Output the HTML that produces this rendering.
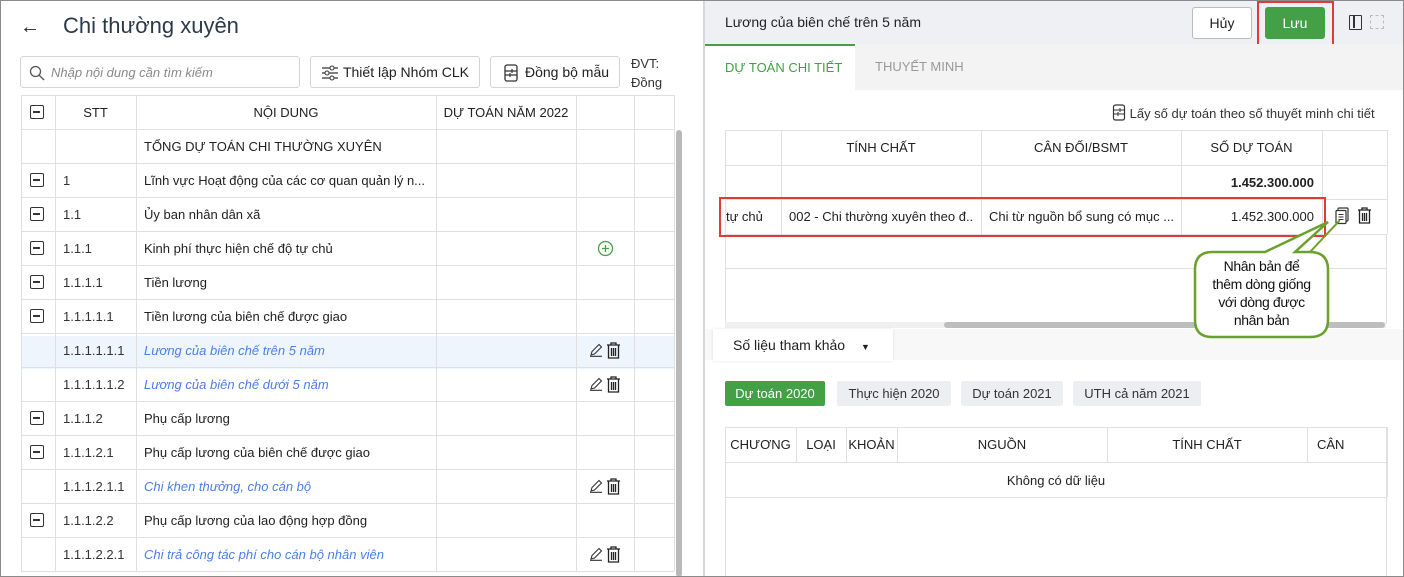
<!DOCTYPE html>
<html><head><meta charset="utf-8"><style>
*{box-sizing:border-box;margin:0;padding:0}
body{width:1404px;height:577px;overflow:hidden;font-family:"Liberation Sans",sans-serif;background:#fff;position:relative;color:#212121;font-size:13px}
.abs{position:absolute}
.frame{position:absolute;left:0;top:0;width:1404px;height:577px;border:1px solid #8a8a8a;pointer-events:none;z-index:50}
.cell{position:absolute;display:flex;align-items:center;white-space:nowrap;overflow:hidden}
.hl{position:absolute;background:#e0e0e0}
.cb{position:absolute;width:14px;height:14px;border:1.5px solid #333;border-radius:2px}
.cb:after{content:"";position:absolute;left:2px;top:5px;width:7px;height:1.5px;background:#333}
.it{color:#4a7fe8;font-style:italic}
.btn{position:absolute;border:1px solid #d5d5d5;border-radius:3px;background:#fff;display:flex;align-items:center;justify-content:center;font-size:14px;white-space:nowrap}
</style></head><body>
<div class="frame"></div>
<!-- LEFT -->
<div class="abs" style="left:20px;top:16px;font-size:20px">←</div>
<div class="abs" style="left:63px;top:13px;font-size:22px;color:#2b3a4a">Chi thường xuyên</div>
<div class="btn" style="left:20px;top:56px;width:280px;height:32px;justify-content:flex-start;padding-left:30px;color:#888;font-style:italic;font-size:13px">Nhập nội dung cần tìm kiếm
<svg class="abs" style="left:8px;top:8px" width="16" height="16" viewBox="0 0 16 16"><circle cx="6.5" cy="6.5" r="5" fill="none" stroke="#555" stroke-width="1.3"/><path d="M10 10l5 5" stroke="#555" stroke-width="1.3"/></svg></div>
<div class="btn" style="left:310px;top:56px;width:170px;height:32px;padding-left:22px">Thiết lập Nhóm CLK
<svg class="abs" style="left:10px;top:8px" width="18" height="16" viewBox="0 0 18 16"><path d="M1 3h16M1 8h16M1 13h16" stroke="#333" stroke-width="1.2"/><circle cx="11" cy="3" r="2" fill="#fff" stroke="#333"/><circle cx="6" cy="8" r="2" fill="#fff" stroke="#333"/><circle cx="11" cy="13" r="2" fill="#fff" stroke="#333"/></svg></div>
<div class="btn" style="left:490px;top:56px;width:130px;height:32px;padding-left:24px">Đồng bộ mẫu
<svg class="abs" style="left:12px;top:7px" width="16" height="18" viewBox="0 0 16 18"><rect x="2" y="1" width="12" height="16" rx="2" fill="none" stroke="#333" stroke-width="1.3"/><path d="M2 7h12M2 11h12M9 5v4M7 9v4" stroke="#333" stroke-width="1.2"/></svg></div>
<div class="abs" style="left:631px;top:54px;font-size:13px;line-height:19px;color:#333">ĐVT:<br>Đồng</div>

<div id="lt"></div>
<div class="abs" style="left:676px;top:130px;width:6px;height:447px;background:#b9b9b9;border-radius:3px"></div>
<div class="abs" style="left:703px;top:0;width:2px;height:577px;background:#d8d8d8"></div>

<!-- RIGHT -->
<div class="abs" style="left:705px;top:0;width:699px;height:44px;background:#eff0f4"></div>
<div class="abs" style="left:725px;top:14px;font-size:14px;color:#222">Lương của biên chế trên 5 năm</div>
<div class="btn" style="left:1192px;top:7px;width:60px;height:32px;border-color:#bbb">Hủy</div>
<div class="btn" style="left:1265px;top:7px;width:60px;height:32px;background:#43a047;border-color:#43a047;color:#fff">Lưu</div>
<div class="abs" style="left:1257px;top:1px;width:77px;height:50px;border:2px solid #e53935"></div>
<div class="abs" style="left:1349px;top:15px;width:13px;height:15px;border:1.5px solid #333;border-radius:1px"><div class="abs" style="left:3px;top:0;width:1.5px;height:12px;background:#333"></div></div>
<div class="abs" style="left:1370px;top:15px;width:14px;height:14px;border:1.5px dashed #bbb"></div>
<div class="abs" style="left:705px;top:44px;width:699px;height:46px;background:#f3f3f3"></div>
<div class="abs" style="left:705px;top:44px;width:150px;height:46px;background:#fff;border-top:2px solid #43a047"></div>
<div class="abs" style="left:725px;top:60px;font-size:13px;color:#43a047">DỰ TOÁN CHI TIẾT</div>
<div class="abs" style="left:875px;top:59px;font-size:13px;color:#999">THUYẾT MINH</div>
<div class="abs" style="left:1112px;top:104px;font-size:13px;color:#333;white-space:nowrap">
<svg style="vertical-align:-3px" width="14" height="17" viewBox="0 0 14 17"><rect x="1.5" y="1" width="11" height="15" rx="2" fill="none" stroke="#333" stroke-width="1.2"/><path d="M1.5 6h11M1.5 10h11M8 4v4M6 8v4" stroke="#333"/></svg> Lấy số dự toán theo số thuyết minh chi tiết</div>
<div id="rt"></div>
<div class="abs" style="left:725px;top:322px;width:661px;height:6px;background:#f0f0f0"></div>
<div class="abs" style="left:944px;top:322px;width:441px;height:6px;background:#bdbdbd;border-radius:3px"></div>
<div class="abs" style="left:719px;top:197px;width:607px;height:40px;border:2px solid #e53935"></div>
<div class="abs" style="left:1335px;top:207px"><svg width="14" height="18" viewBox="0 0 14 18"><rect x="3" y="1" width="10" height="13" rx="1" fill="none" stroke="#333" stroke-width="1.2"/><rect x="1" y="3.5" width="10" height="13" rx="1" fill="#fff" stroke="#333" stroke-width="1.2"/><path d="M3.5 7.5h5M3.5 10h5M3.5 12.5h5" stroke="#333"/></svg></div>
<div class="abs" style="left:1357px;top:207px"><svg width="15" height="17" viewBox="0 0 15 17"><path d="M1 3h13M5 3V1h5v2M2.5 3.5v12.5h10V3.5M5.5 6v8M7.5 6v8M9.5 6v8" fill="none" stroke="#222" stroke-width="1.3"/></svg></div>
<!-- callout -->
<svg class="abs" style="left:1190px;top:220px;z-index:5" width="150" height="120"><path d="M150 0 L120 32" stroke="#6aa02c" stroke-width="2"/><path d="M22 32 H75 L138 2 L105 32 H120 Q138 32 138 50 V100 Q138 117 120 117 H22 Q5 117 5 100 V50 Q5 32 22 32Z" fill="#fff" stroke="#6aa02c" stroke-width="2.5"/></svg>
<div class="abs" style="left:1195px;top:257px;width:133px;text-align:center;font-size:14px;line-height:18px;color:#111;z-index:6;letter-spacing:-0.4px">Nhân bản để<br>thêm dòng giống<br>với dòng được<br>nhân bản</div>

<div class="abs" style="left:705px;top:329px;width:699px;height:31px;background:#f8f8f8"></div>
<div class="abs" style="left:713px;top:329px;width:180px;height:32px;background:#fff;box-shadow:0 0 3px rgba(0,0,0,.1)"></div>
<div class="abs" style="left:733px;top:337px;font-size:14px">Số liệu tham khảo <span style="margin-left:12px;font-size:9px">▼</span></div>
<div class="abs" style="left:725px;top:381px;width:100px;height:25px;background:#43a047;color:#fff;border-radius:2px;text-align:center;line-height:25px">Dự toán 2020</div>
<div class="abs" style="left:837px;top:381px;width:114px;height:25px;background:#eceef1;border-radius:2px;text-align:center;line-height:25px;color:#333">Thực hiện 2020</div>
<div class="abs" style="left:961px;top:381px;width:102px;height:25px;background:#eceef1;border-radius:2px;text-align:center;line-height:25px;color:#333">Dự toán 2021</div>
<div class="abs" style="left:1073px;top:381px;width:128px;height:25px;background:#eceef1;border-radius:2px;text-align:center;line-height:25px;color:#333">UTH cả năm 2021</div>
<div id="bt"></div>
<script>
function tbl(id,xs,ys,cells,vb){let h='';const L=xs[0],R=xs[xs.length-1],T=ys[0],B=vb||ys[ys.length-1];
xs.forEach(x=>h+=`<div class="hl" style="left:${x}px;top:${T}px;width:1px;height:${B-T}px"></div>`);
ys.forEach(y=>h+=`<div class="hl" style="left:${L}px;top:${y}px;width:${R-L}px;height:1px"></div>`);
cells.forEach(c=>{h+=`<div class="cell" style="left:${xs[c[0]]+c[3]}px;top:${ys[c[1]]}px;width:${xs[c[0]+1]-xs[c[0]]-c[3]*2}px;height:${ys[c[1]+1]-ys[c[1]]}px;justify-content:${c[4]||'flex-start'};${c[5]||''}">${c[2]}</div>`});
document.getElementById(id).innerHTML=h;}
let ly=[95];for(let i=0;i<14;i++)ly.push(95+34*(i+1));
const lx=[21,55,136,436,576,634,674];
let lc=[[1,0,'STT',0,'center'],[2,0,'NỘI DUNG',0,'center'],[3,0,'DỰ TOÁN NĂM 2022',0,'center'],[2,1,'TỔNG DỰ TOÁN CHI THƯỜNG XUYÊN',8]];
const rows=[['1','Lĩnh vực Hoạt động của các cơ quan quản lý n...',1],['1.1','Ủy ban nhân dân xã',1],['1.1.1','Kinh phí thực hiện chế độ tự chủ',1],['1.1.1.1','Tiền lương',1],['1.1.1.1.1','Tiền lương của biên chế được giao',1],['1.1.1.1.1.1','Lương của biên chế trên 5 năm',0],['1.1.1.1.1.2','Lương của biên chế dưới 5 năm',0],['1.1.1.2','Phụ cấp lương',1],['1.1.1.2.1','Phụ cấp lương của biên chế được giao',1],['1.1.1.2.1.1','Chi khen thưởng, cho cán bộ',0],['1.1.1.2.2','Phụ cấp lương của lao động hợp đồng',1],['1.1.1.2.2.1','Chi trả công tác phí cho cán bộ nhân viên',0],['','',0]];
const ed='<svg width="14" height="14" viewBox="0 0 14 14"><path d="M2 12l1-3.5L10 1.5l2.5 2.5L5.5 11zM1 13.3h12" fill="none" stroke="#333" stroke-width="1.1"/></svg>';
const tr='<svg width="15" height="17" viewBox="0 0 15 17"><path d="M1 3h13M5 3V1h5v2M2.5 3.5v12.5h10V3.5M5.5 6v8M7.5 6v8M9.5 6v8" fill="none" stroke="#222" stroke-width="1.3"/></svg>';
let bg=`<div class="abs" style="left:22px;top:336px;width:652px;height:33px;background:#eef5fd"></div>`;
let cbs=`<div class="cb" style="left:30px;top:105px"></div>`;
rows.forEach((r,i)=>{const row=i+2;lc.push([1,row,r[0],8,'flex-start','color:#333']);
lc.push([2,row,r[2]?r[1]:`<span class="it">${r[1]}</span>`,8]);
if(r[2])cbs+=`<div class="cb" style="left:30px;top:${ly[row]+10}px"></div>`;
if(!r[2]&&r[0])lc.push([4,row,ed+'&nbsp;'+tr,0,'center']);});
lc.push([4,4,'<svg width="17" height="17"><circle cx="8.5" cy="8.5" r="7" fill="none" stroke="#43a047" stroke-width="1.3"/><path d="M8.5 5v7M5 8.5h7" stroke="#43a047" stroke-width="1.3"/></svg>',0,'center']);
tbl('lt',lx,ly,lc);
document.getElementById('lt').insertAdjacentHTML('afterbegin',bg);
document.getElementById('lt').insertAdjacentHTML('beforeend',cbs);
tbl('rt',[725,781,981,1181,1322,1387],[130,165,199,234,268],[[1,0,'TÍNH CHẤT',0,'center'],[2,0,'CÂN ĐỐI/BSMT',0,'center'],[3,0,'SỐ DỰ TOÁN',0,'center'],[3,1,'<b>1.452.300.000</b>',8,'flex-end'],[0,2,'tự chủ',1],[1,2,'002 - Chi thường xuyên theo đ...',8],[2,2,'Chi từ nguồn bổ sung có mục ...',8],[3,2,'1.452.300.000',8,'flex-end']],234);
document.getElementById('rt').insertAdjacentHTML('beforeend','<div class="hl" style="left:725px;top:234px;width:1px;height:90px"></div><div class="hl" style="left:1386px;top:234px;width:1px;height:90px"></div>');
tbl('bt',[725,796,846,897,1107,1307,1387],[427,462,497],[[0,0,'CHƯƠNG',0,'center'],[1,0,'LOẠI',0,'center'],[2,0,'KHOẢN',0,'center'],[3,0,'NGUỒN',0,'center'],[4,0,'TÍNH CHẤT',0,'center'],[5,0,'CÂN',10]]);
document.getElementById('bt').insertAdjacentHTML('beforeend','<div class="abs" style="left:726px;top:463px;width:660px;height:34px;background:#fff;display:flex;align-items:center;justify-content:center">Không có dữ liệu</div><div class="hl" style="left:725px;top:462px;width:1px;height:115px"></div><div class="hl" style="left:1386px;top:427px;width:1px;height:150px"></div>');
</script>
</body></html>
